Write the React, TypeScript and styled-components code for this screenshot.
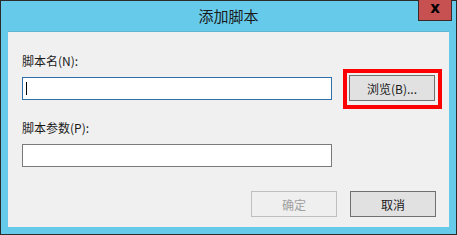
import React from "react";
import styled, { createGlobalStyle } from "styled-components";

const Global = createGlobalStyle`
  html, body { margin: 0; padding: 0; background: #ffffff; }
  body { font-family: "Noto Sans CJK SC", "Noto Sans", sans-serif; }
`;

const Window = styled.div`
  width: 457px;
  height: 235px;
  box-sizing: border-box;
  border: 1px solid #2b2b2b;
  background: #66cbea;
  display: flex;
  flex-direction: column;
  padding: 0 7px 7px 7px;
`;

const TitleBar = styled.div`
  position: relative;
  height: 30px;
  flex: none;
  display: flex;
  align-items: center;
  justify-content: center;
  font-size: 15px;
  color: #1a1a1a;
  padding-bottom: 2px;
  box-sizing: border-box;
`;

const CloseButton = styled.div`
  position: absolute;
  top: -1px;
  right: -3px;
  width: 34px;
  height: 21px;
  box-sizing: border-box;
  border: 1px solid #3a2a2a;
  border-top: none;
  background: #c75050;
  display: flex;
  align-items: center;
  justify-content: center;
  font-family: "DejaVu Sans", sans-serif;
  font-weight: bold;
  font-size: 15px;
  line-height: 1;
  color: #000;
  padding-bottom: 3px;
`;

const Content = styled.div`
  flex: 1;
  background: #f0f0f0;
  border-top: 1px solid #5fb6d3;
  display: flex;
  flex-direction: column;
  padding: 21px 13px 0 14px;
`;

const Label = styled.div<{ $gap: number }>`
  font-size: 12px;
  line-height: 16px;
  color: #1a1a1a;
  margin-top: ${(p) => p.$gap}px;
`;

const Row = styled.div`
  display: flex;
  align-items: center;
  gap: 17px;
  margin-top: 6px;
`;

const TextBox = styled.div<{ $focused?: boolean; $top?: number }>`
  width: 310px;
  height: 23px;
  box-sizing: border-box;
  background: #ffffff;
  border: 1px solid ${(p) => (p.$focused ? "#2f6fa8" : "#7a7a7a")};
  margin-top: ${(p) => p.$top ?? 0}px;
  display: flex;
  align-items: center;
  padding-left: 3px;
`;

const Caret = styled.div`
  width: 1px;
  height: 13px;
  background: #000;
`;

const Highlight = styled.div`
  position: relative;
  display: flex;
  &::after {
    content: "";
    position: absolute;
    top: -6px;
    left: -6px;
    right: -7px;
    bottom: -8px;
    border: 4px solid #ff0000;
    box-sizing: border-box;
    pointer-events: none;
  }
`;

const Button = styled.div<{ $disabled?: boolean }>`
  width: 86px;
  height: 26px;
  box-sizing: border-box;
  border: 1px solid ${(p) => (p.$disabled ? "#bfbfbf" : "#707070")};
  background: ${(p) => (p.$disabled ? "#efefef" : "#e1e1e1")};
  color: ${(p) => (p.$disabled ? "#a0a0a0" : "#1a1a1a")};
  font-size: 12px;
  display: flex;
  align-items: center;
  justify-content: center;
`;

const ButtonBar = styled.div`
  display: flex;
  justify-content: flex-end;
  gap: 13px;
  margin-top: 24px;
`;

export default function App() {
  return (
    <>
      <Global />
      <Window>
        <TitleBar>
          添加脚本
          <CloseButton>x</CloseButton>
        </TitleBar>
        <Content>
          <Label $gap={0}>脚本名(N):</Label>
          <Row>
            <TextBox $focused>
              <Caret />
            </TextBox>
            <Highlight>
              <Button>浏览(B)...</Button>
            </Highlight>
          </Row>
          <Label $gap={19}>脚本参数(P):</Label>
          <TextBox $top={8} />
          <ButtonBar>
            <Button $disabled>确定</Button>
            <Button>取消</Button>
          </ButtonBar>
        </Content>
      </Window>
    </>
  );
}
